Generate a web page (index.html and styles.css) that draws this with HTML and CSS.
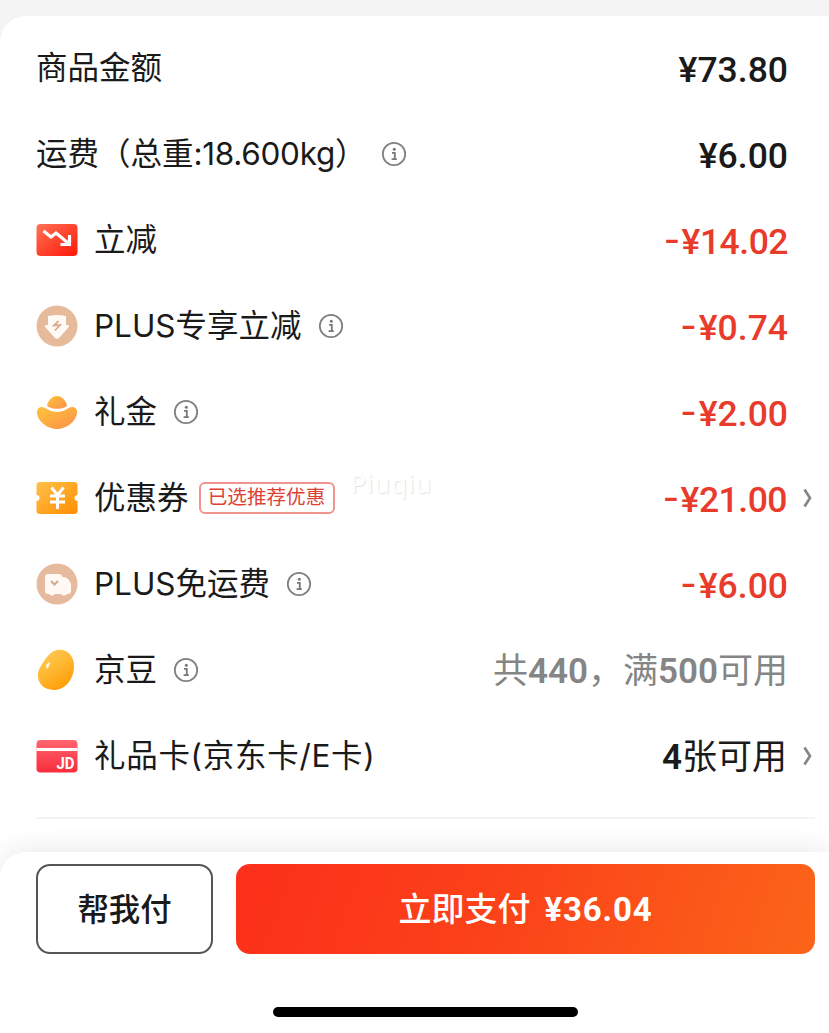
FILE: index.html
```html
<!DOCTYPE html>
<html lang="zh-CN">
<head>
  <meta charset="UTF-8">
  <meta name="viewport" content="width=device-width, initial-scale=1.0">
  <title>确认订单</title>
  <link rel="stylesheet" href="styles.css">
</head>
<body>
  <!-- Shared symbols -->
  <svg class="symbols" width="0" height="0">
    <symbol id="info" viewBox="0 0 26 26">
      <circle cx="13" cy="13" r="11.2" fill="none" stroke="#808080" stroke-width="1.8"/>
      <circle cx="13.3" cy="8.3" r="1.5" fill="#777"/>
      <path d="M11 11.8h2.8v6.2M10.6 18.2h5.2" fill="none" stroke="#777" stroke-width="1.8"/>
    </symbol>
    <symbol id="arrow" viewBox="0 0 10 20">
      <path d="M1.500 1.500L7 10L1.500 18.500" fill="none" stroke="#858585" stroke-width="2.700"/>
    </symbol>
  </svg>

  <main class="price-card">
    <div class="row">
      <span class="label">商品金额</span>
      <span class="price">¥73.80</span>
    </div>

    <div class="row">
      <span class="label">运费（总重<span class="weight">:18.600kg</span>）</span>
      <svg class="info info-freight"><use href="#info"/></svg>
      <span class="price">¥6.00</span>
    </div>

    <div class="row">
      <svg class="icon" viewBox="0 0 42 42">
        <defs>
          <linearGradient id="red" x1="0" y1="0" x2="1" y2="1">
            <stop offset="0" stop-color="#ff7254"/>
            <stop offset="1" stop-color="#ff1708"/>
          </linearGradient>
        </defs>
        <rect x="0.5" y="5" width="41" height="32" rx="4" fill="url(#red)"/>
        <path d="M7.500 12l7.500 6 5-4 12 10M33.500 16v9.500H24.500" fill="none" stroke="#fff" stroke-width="3.2"/>
      </svg>
      <span class="label">立减</span>
      <span class="price red long"><i>-</i>¥14.02</span>
    </div>

    <div class="row">
      <svg class="icon" viewBox="0 0 42 42">
        <circle cx="21" cy="21" r="20.5" fill="#e5bb9b"/>
        <path d="M12 11q9-2 18 0v9h2q2 1 0 3l-9 10q-2 1.500-4 0l-9-10q-2-2 0-3h2z" fill="#fffaf6"/>
        <path d="M22.500 16l-4.500 4.500 6-.5-5 5.500" fill="none" stroke="#e0a98b" stroke-width="1.800"/>
      </svg>
      <span class="label">PLUS专享立减</span>
      <svg class="info"><use href="#info"/></svg>
      <span class="price red"><i>-</i>¥0.74</span>
    </div>

    <div class="row">
      <svg class="icon" viewBox="0 0 42 42">
        <defs>
          <linearGradient id="ingot" x1="0" y1="0" x2="1" y2="1">
            <stop offset="0" stop-color="#ffc43c"/>
            <stop offset="1" stop-color="#fb8f48"/>
          </linearGradient>
        </defs>
        <path d="M11 14C13 8 17 5 21 5s8 3 10 9c-1 5-19 5-20 0z" fill="url(#ingot)"/>
        <path d="M1 20c1-5 6-5 10-2 6 4 14 4 20 0 4-3 9-3 10 2 1 8-9 18-20 18S0 28 1 20z" fill="url(#ingot)"/>
      </svg>
      <span class="label">礼金</span>
      <svg class="info"><use href="#info"/></svg>
      <span class="price red"><i>-</i>¥2.00</span>
    </div>

    <div class="row">
      <svg class="icon" viewBox="0 0 42 42">
        <defs>
          <linearGradient id="ticket" x1="0" y1="0" x2="1" y2="1">
            <stop offset="0" stop-color="#ffc14b"/>
            <stop offset="1" stop-color="#ff8e00"/>
          </linearGradient>
        </defs>
        <path d="M4 5h34q3.500 0 3.500 3v10a3 3 0 0 0 0 6v10q0 3-3.500 3H4q-3.500 0-3.500-3V24a3 3 0 0 0 0-6V8q0-3 3.500-3z" fill="url(#ticket)"/>
        <path d="M15.500 10.500l6 7.500 6-7.500M21.500 18v14M14 19h15M14 25h15" fill="none" stroke="#fff" stroke-width="3"/>
      </svg>
      <span class="label">优惠券</span>
      <span class="tag">已选推荐优惠</span>
      <span class="price red long"><i>-</i>¥21.00</span>
      <svg class="arrow"><use href="#arrow"/></svg>
      <span class="watermark">Piuqiu</span>
    </div>

    <div class="row">
      <svg class="icon" viewBox="0 0 42 42">
        <circle cx="21" cy="21" r="20.500" fill="#e5ba9f"/>
        <path d="M12 11h11q3 0 3 3h2q5 1 7 7v7q0 3-3 3h-1q-3 3.500-6 0h-6q-3 3.500-6 0h-1q-3 0-3-3V14q0-3 3-3z" fill="#fff8f3"/>
        <path d="M15 18l3.500 3.500L22 18" fill="none" stroke="#d3aa91" stroke-width="2"/>
      </svg>
      <span class="label">PLUS免运费</span>
      <svg class="info"><use href="#info"/></svg>
      <span class="price red"><i>-</i>¥6.00</span>
    </div>

    <div class="row">
      <svg class="icon" viewBox="0 0 42 42">
        <defs>
          <linearGradient id="bean" x1="0.2" y1="0" x2="0.8" y2="1">
            <stop offset="0" stop-color="#ffca59"/>
            <stop offset="0.5" stop-color="#ffb52e"/>
            <stop offset="1" stop-color="#ff9800"/>
          </linearGradient>
        </defs>
        <path d="M21 1C31-1 39 7 38 19S29 41 18 41 1 34 2 24c1-5 3-7 6-12 4-6 8-10 13-11z" fill="url(#bean)"/>
        <path d="M10 18q-1-2 2-4 3-2 2 1l-2 4q-1 2-2-1z" fill="#fff4d0"/>
      </svg>
      <span class="label">京豆</span>
      <svg class="info"><use href="#info"/></svg>
      <span class="price gray">共<b>440</b>，满<b>500</b>可用</span>
    </div>

    <div class="row">
      <svg class="icon" viewBox="0 0 42 42">
        <defs>
          <linearGradient id="giftcard" x1="0" y1="0" x2="0" y2="1">
            <stop offset="0" stop-color="#ff6570"/>
            <stop offset="1" stop-color="#f92d3b"/>
          </linearGradient>
        </defs>
        <rect x="0.500" y="5" width="41" height="32.500" rx="4" fill="url(#giftcard)"/>
        <rect x="0.500" y="13" width="41" height="3" fill="#fff"/>
        <text class="jd" x="20.500" y="34" textLength="18" lengthAdjust="spacingAndGlyphs">JD</text>
      </svg>
      <span class="label label-card">礼品卡(京东卡/E卡)</span>
      <span class="price"><b>4</b>张可用</span>
      <svg class="arrow"><use href="#arrow"/></svg>
    </div>
    <div class="divider"></div>
  </main>

  <!-- Bottom payment bar -->
  <footer class="pay-bar">
    <div class="buttons">
      <button class="btn-help">帮我付</button>
      <button class="btn-pay">立即支付<span class="total">¥36.04</span></button>
    </div>
    <div class="home-indicator"></div>
  </footer>
</body>
</html>
```
FILE: styles.css
```css
* {
  box-sizing: border-box;
}
body {
  margin: 0;
  padding-top: 16px;
  height: 1033px;
  overflow: hidden;
  display: flex;
  flex-direction: column;
  background-color: #f4f4f4;
  color: #1a1a1a;
  font-family: Inter, "Noto Sans CJK SC", sans-serif;
}
.symbols {
  position: absolute;
}
.price-card {
  height: 876px;
  flex: none;
  padding: 9px 14px 0 36px;
  background-color: #fff;
  border-radius: 26px 0 0 0;
}
.row {
  position: relative;
  display: flex;
  align-items: center;
  height: 86px;
}
.icon {
  width: 42px;
  height: 42px;
  margin-right: 16px;
  flex: none;
}
.label {
  font-size: 31.5px;
  line-height: 46px;
  white-space: nowrap;
}
.label-card {
  letter-spacing: 0.7px;
}
.weight {
  letter-spacing: -0.3px;
}
.info {
  width: 26px;
  height: 26px;
  margin-left: 16px;
  flex: none;
}
.info-freight {
  margin-left: 15px;
}
.price {
  margin-left: auto;
  margin-right: 27px;
  margin-top: 4px;
  font-family: Roboto, "Noto Sans CJK SC", sans-serif;
  font-size: 35.5px;
  font-weight: 500;
  line-height: 46px;
  white-space: nowrap;
}
.price i {
  position: relative;
  top: -2px;
  margin-right: 2px;
  font-family: Inter, sans-serif;
  font-style: normal;
}
.price:has(b) {
  font-size: 35px;
  font-weight: 400;
}
.price b {
  font-weight: 600;
}
.long {
  letter-spacing: -0.5px;
}
.red {
  color: #e93b2b;
}
.gray {
  color: #858585;
}
.arrow {
  width: 10px;
  height: 20px;
  margin-left: -11px;
  margin-right: 2px;
  flex: none;
}
.tag {
  margin-left: 10px;
  width: 136px;
  height: 32px;
  border: 2px solid #f0958d;
  border-radius: 6px;
  color: #df4035;
  font-size: 19.6px;
  line-height: 26px;
  text-align: center;
  white-space: nowrap;
}
.watermark {
  position: absolute;
  left: 314px;
  top: 10px;
  color: #fff;
  font-family: "Noto Sans", sans-serif;
  font-size: 26px;
  letter-spacing: 0.8px;
  text-shadow: 1px 1px 1px #e2e2e2;
}
.jd {
  font-family: Roboto, sans-serif;
  font-size: 17px;
  font-weight: 700;
  fill: #fff;
}
.divider {
  height: 2px;
  margin-top: 18px;
  background-color: #f4f4f4;
}
.pay-bar {
  position: relative;
  flex: 1;
  margin-top: -40px;
  padding: 12px 14px 0 36px;
  background-color: #fff;
  border-radius: 26px 0 0 0;
  box-shadow: 0 -2px 28px rgba(0, 0, 0, 0.09);
}
.buttons {
  display: flex;
  gap: 23px;
}
.buttons button {
  height: 90px;
  border-radius: 14px;
  padding: 0 0 4px;
  font-family: Inter, "Noto Sans CJK SC", sans-serif;
  font-size: 31.4px;
  font-weight: 500;
}
.btn-help {
  width: 177px;
  border: 2px solid #555;
  background-color: #fff;
  color: #1a1a1a;
}
.btn-pay {
  flex: 1;
  border: none;
  background: linear-gradient(110deg, #fc2f1b, #fb4219 45%, #fb6519);
  color: #fff;
}
.buttons .btn-pay {
  font-size: 33px;
  padding-bottom: 5px;
}
.total {
  margin-left: 14px;
  font-family: Roboto, sans-serif;
  font-size: 33px;
  font-weight: 700;
  letter-spacing: 0.8px;
}
.home-indicator {
  width: 305px;
  height: 10px;
  margin: 53px 0 0 237px;
  border-radius: 5px;
  background-color: #000;
}
```
